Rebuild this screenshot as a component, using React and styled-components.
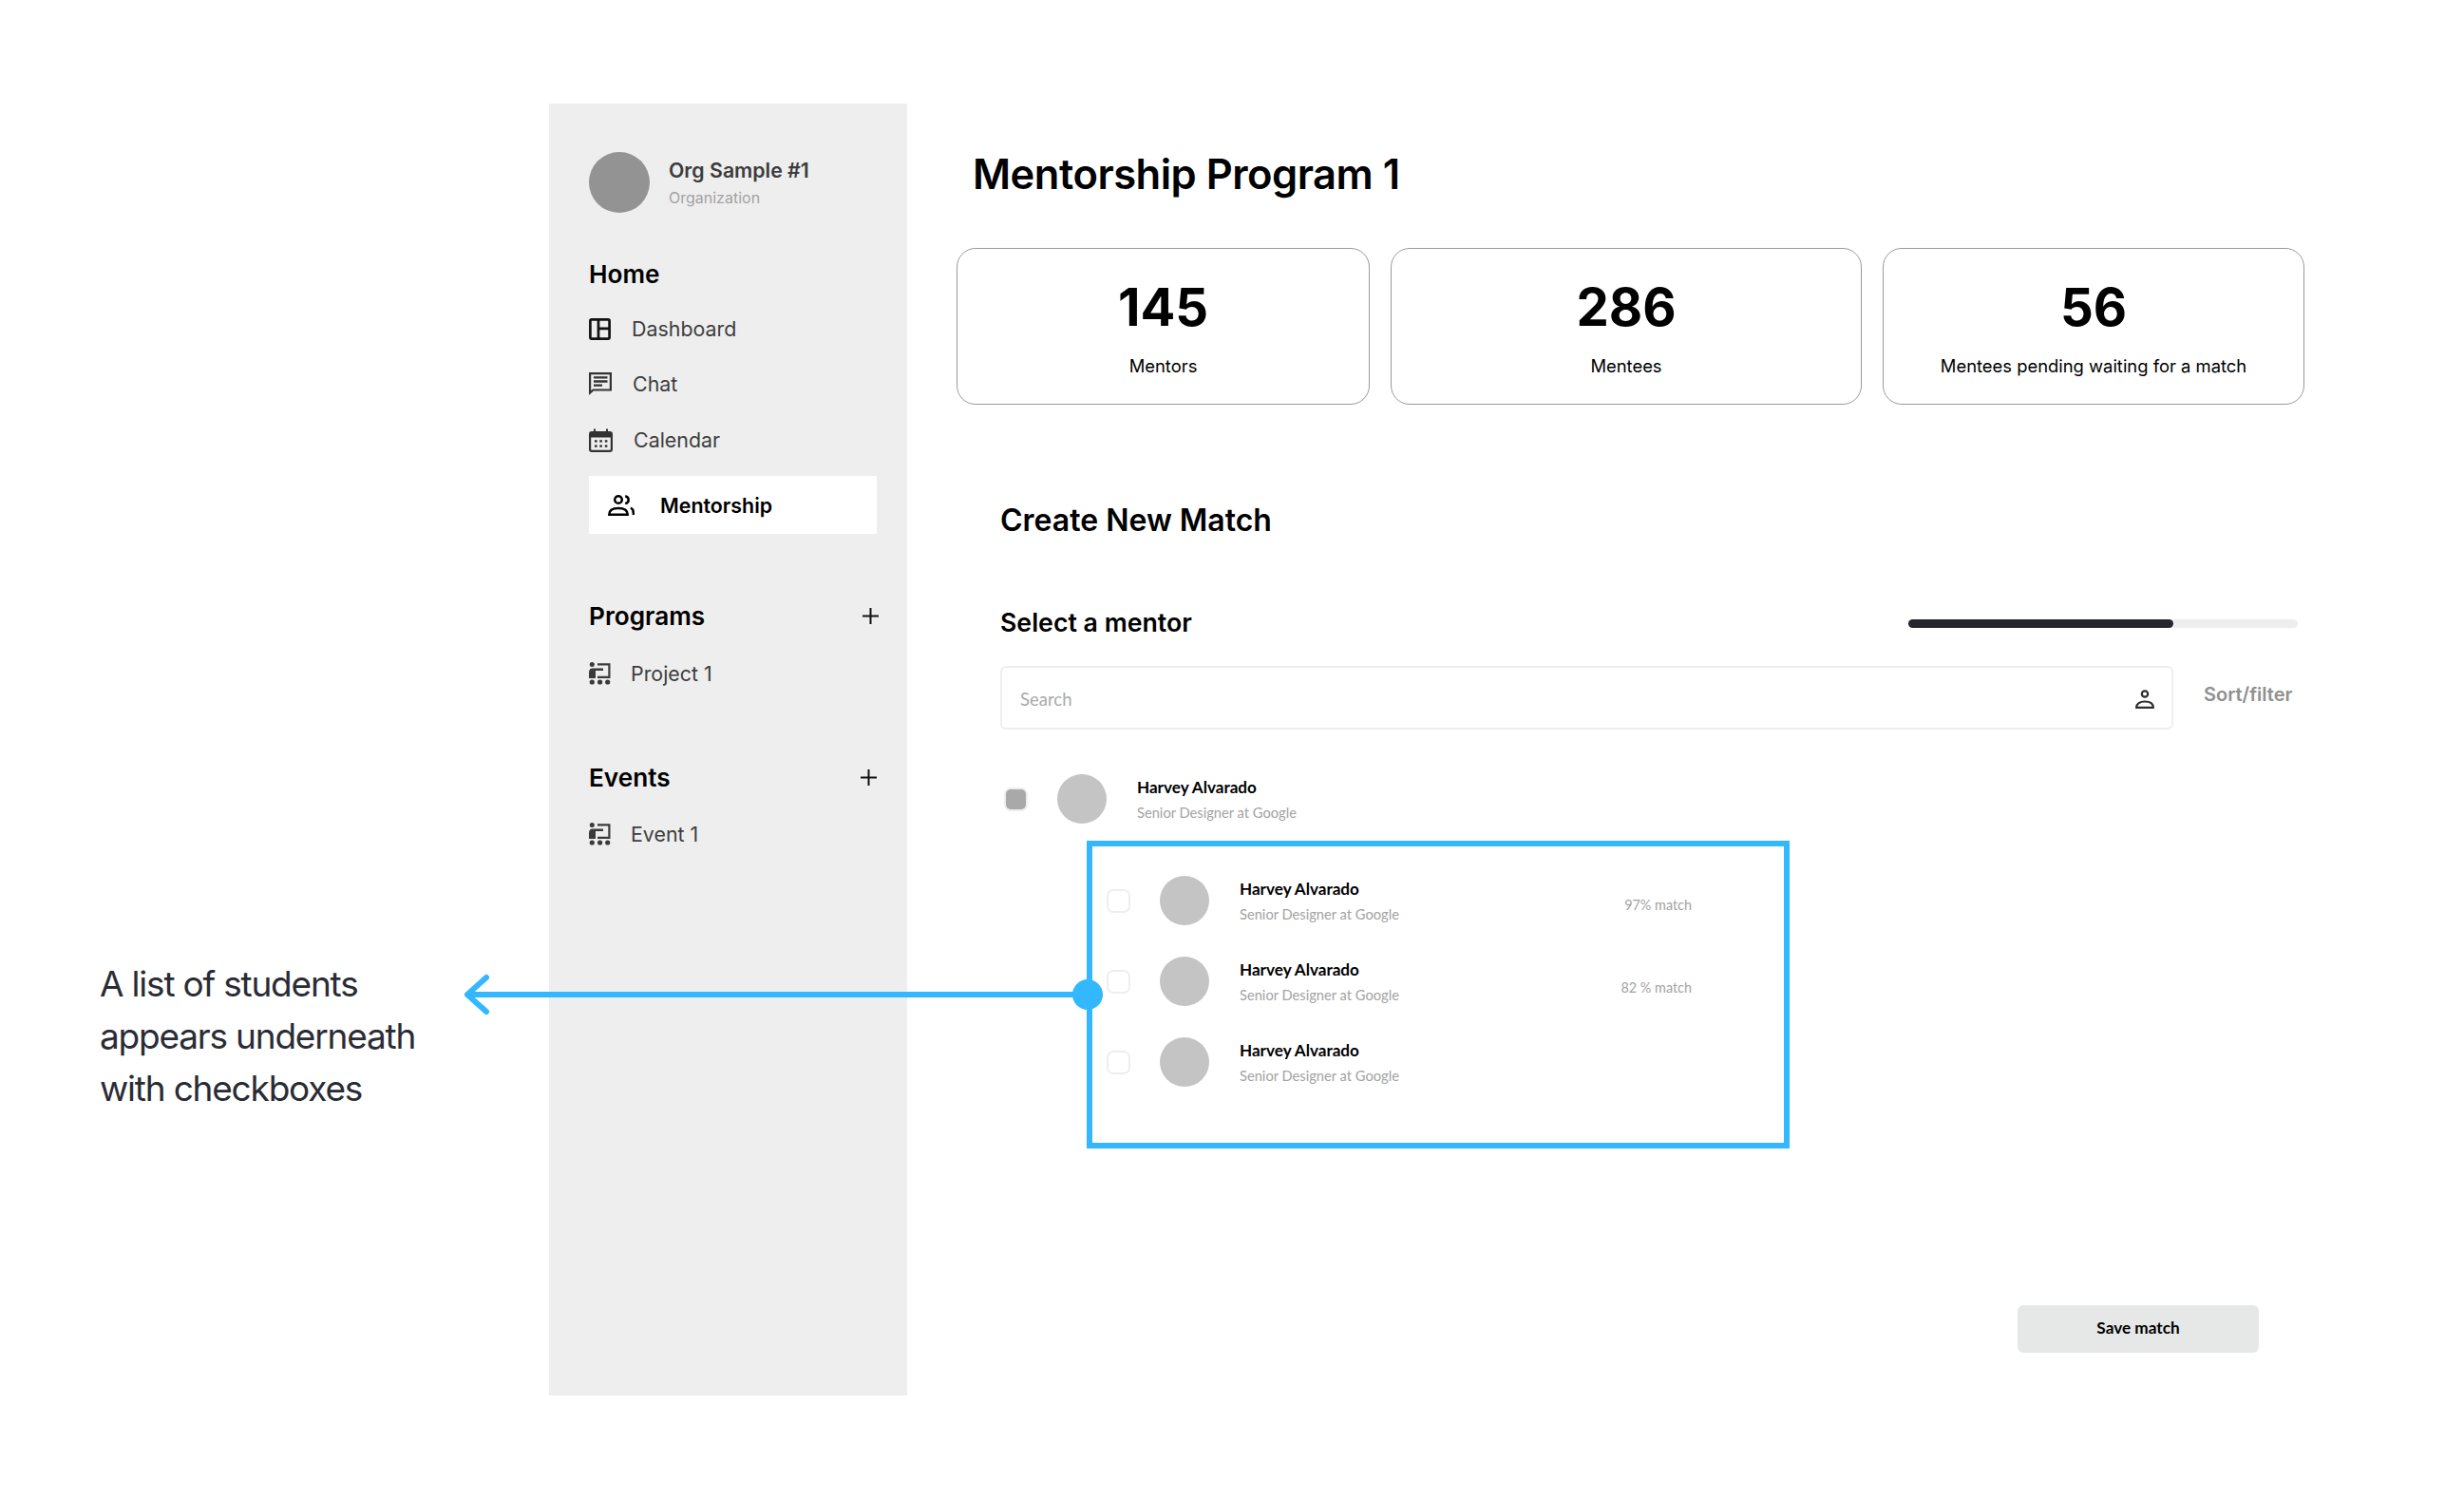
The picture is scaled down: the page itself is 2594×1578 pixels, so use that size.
import React from 'react';
import styled, { createGlobalStyle } from 'styled-components';

const GlobalStyle = createGlobalStyle`
  html, body {
    margin: 0;
    padding: 0;
    background: #fff;
  }
  * {
    box-sizing: border-box;
  }
`;

const Page = styled.div`
  position: relative;
  width: 2594px;
  height: 1578px;
  padding-top: 109px;
  display: flex;
  overflow: hidden;
  font-family: Inter, "Liberation Sans", sans-serif;
  color: #000;
`;

const Annotation = styled.div`
  width: 578px;
  flex-shrink: 0;
  padding: 899px 0 0 105px;
  font-size: 37px;
  line-height: 55px;
  letter-spacing: -1.2px;
  color: #2a2c35;
`;

const Sidebar = styled.aside`
  width: 377px;
  height: 1360px;
  flex-shrink: 0;
  background: #eee;
  padding: 51px 32px 0 42px;
`;

const Org = styled.div`
  display: flex;
  align-items: center;
  gap: 20px;
  margin-bottom: 47px;
`;

const OrgAvatar = styled.div`
  width: 64px;
  height: 64px;
  border-radius: 50%;
  background: #939393;
`;

const OrgName = styled.div`
  font-size: 21.3px;
  line-height: 28px;
  font-weight: 600;
  color: #3c3c3c;
`;

const OrgType = styled.div`
  font-size: 16px;
  line-height: 24px;
  margin-top: 3px;
  color: #a3a3a3;
`;

const SideHeading = styled.div`
  display: flex;
  align-items: center;
  justify-content: space-between;
  height: 34px;
  font-size: 26.2px;
  font-weight: 600;
  margin-top: ${(p) => p.$top || 0}px;
  margin-right: ${(p) => p.$right || 0}px;
`;

const NavItem = styled.div`
  display: flex;
  align-items: center;
  height: 34px;
  margin-top: ${(p) => p.$top}px;
  gap: ${(p) => p.$gap || 22}px;
  font-size: 21.4px;
  color: #3e3e3e;
`;

const ActiveItem = styled.div`
  display: flex;
  align-items: center;
  height: 61px;
  margin-top: 21px;
  padding-left: 20px;
  gap: 27px;
  background: #fff;
  font-size: 21.4px;
  font-weight: 600;
  color: #000;
`;

const Icon = styled.svg`
  display: block;
  flex-shrink: 0;
`;

const Main = styled.main`
  padding: 42px 0 0 52px;
`;

const Title = styled.h1`
  margin: 0 0 46px 17px;
  font-size: 43.5px;
  line-height: 64px;
  font-weight: 600;
  letter-spacing: -0.5px;
`;

const Stats = styled.div`
  display: flex;
  gap: 22px;
`;

const StatCard = styled.div`
  width: ${(p) => p.$width}px;
  height: 165px;
  border: 1.5px solid #9a9a9a;
  border-radius: 20px;
  display: flex;
  flex-direction: column;
  align-items: center;
  padding-top: 27px;
`;

const StatNumber = styled.div`
  font-size: 54.5px;
  line-height: 68px;
  font-weight: 700;
`;

const StatLabel = styled.div`
  font-size: 18.4px;
  line-height: 24px;
  margin-top: 16px;
`;

const Section = styled.section`
  padding-left: 46px;
  margin-top: 102px;
`;

const SectionTitle = styled.h2`
  margin: 0 0 70px;
  font-size: 32px;
  line-height: 40px;
  font-weight: 600;
`;

const SelectRow = styled.div`
  width: 1366px;
  display: flex;
  align-items: center;
  justify-content: space-between;
  margin-bottom: 29px;
`;

const SelectTitle = styled.h3`
  margin: 0;
  font-size: 26.7px;
  line-height: 34px;
  font-weight: 600;
`;

const Progress = styled.div`
  width: 410px;
  height: 9px;
  margin-top: 3px;
  border-radius: 5px;
  background: #eee;
`;

const ProgressFill = styled.div`
  height: 100%;
  border-radius: 5px;
  background: #25272d;
`;

const SearchRow = styled.div`
  display: flex;
  align-items: center;
  gap: 32px;
`;

const SearchBox = styled.div`
  width: 1235px;
  height: 67px;
  border: 2px solid #eee;
  border-radius: 6px;
  display: flex;
  align-items: center;
  justify-content: space-between;
  padding: 3px 18px 0 19px;
  font-family: Lato, sans-serif;
  font-size: 18.5px;
  color: #aaa;
`;

const SortFilter = styled.div`
  font-size: 20px;
  font-weight: 600;
  color: #8f8f8f;
  padding-bottom: 7px;
`;

const Person = styled.div`
  display: flex;
  align-items: center;
  gap: ${(p) => p.$gap}px;
  font-family: Lato, sans-serif;
`;

const MentorRow = styled(Person)`
  margin-top: 47px;
  padding-left: 4px;
`;

const Check = styled.div`
  width: 25px;
  height: 25px;
  border-radius: 7px;
  border: 2px solid #eee;
  background: ${(p) => (p.$on ? '#a9a9a9' : '#fff')};
  flex-shrink: 0;
`;

const Avatar = styled.div`
  width: 52px;
  height: 52px;
  border-radius: 50%;
  background: #c4c4c4;
  flex-shrink: 0;
  margin: 0 ${(p) => p.$after}px 0 0;
`;

const Name = styled.div`
  font-size: 17.1px;
  line-height: 24px;
  margin-top: 1.5px;
  font-weight: 700;
  color: #000;
`;

const Role = styled.div`
  font-size: 14.7px;
  line-height: 24px;
  margin-top: 1.5px;
  color: #a3a3a3;
`;

const Match = styled.div`
  margin-left: auto;
  padding-top: ${(p) => p.$drop}px;
  font-size: 14.4px;
  color: #a3a3a3;
`;

const ListBox = styled.div`
  width: 740px;
  height: 324px;
  margin: 18px 0 0 91px;
  border: 6px solid #33b8ff;
  padding: 31px 97px 0 15px;
  display: flex;
  flex-direction: column;
  gap: 33px;
`;

const SaveButton = styled.button`
  display: block;
  width: 254px;
  height: 50px;
  margin: 165px 0 0 1071px;
  padding: 0 0 4px;
  border: none;
  border-radius: 6px;
  background: #e6e7e7;
  font-family: Lato, sans-serif;
  font-size: 17.2px;
  font-weight: 700;
  color: #000;
`;

const Callout = styled.svg`
  position: absolute;
  left: 480px;
  top: 1020px;
`;

const DashboardIcon = () => (
  <Icon width="23" height="23" viewBox="0 0 23 23" fill="none" stroke="#111" strokeWidth="2.7">
    <rect x="1.4" y="1.4" width="20.2" height="20.2" rx="1.5" />
    <path d="M10 1.4v20.2M10 10.8h11.600" />
  </Icon>
);

const ChatIcon = () => (
  <Icon width="24" height="25" viewBox="0 0 24 25" fill="none" stroke="#333">
    <path d="M1.1 21.5V1.100h21.800v17.400H4.500z" strokeWidth="2.2" />
    <path d="M5 5.4h14.500M5 9.500h14.500M5 13.700h9" strokeWidth="2.3" />
  </Icon>
);

const CalendarIcon = () => (
  <Icon width="25" height="25" viewBox="0 0 25 25" fill="#333">
    <path
      fillRule="evenodd"
      d="M3 3h2V0.500h2V3h11V0.500h2V3h2a3 3 0 0 1 3 3v16a3 3 0 0 1-3 3H3a3 3 0 0 1-3-3V6a3 3 0 0 1 3-3zM2.200 9.500V22c0 .5.300.8.800.8h19c.5 0 .8-.3.800-.8V9.500z"
    />
    <rect x="6" y="12.2" width="2.6" height="2.4" />
    <rect x="11.3" y="12.2" width="2.6" height="2.4" />
    <rect x="16.8" y="12.2" width="2.6" height="2.4" />
    <rect x="6" y="17.4" width="2.6" height="2.4" />
    <rect x="11.3" y="17.4" width="2.6" height="2.4" />
    <rect x="16.8" y="17.4" width="2.6" height="2.4" />
  </Icon>
);

const PeopleIcon = () => (
  <Icon width="28" height="22" viewBox="0 0 28 22" fill="none" stroke="#000" strokeWidth="2.5">
    <circle cx="11" cy="5" r="3.8" />
    <path d="M1.3 20.700c0-4.500 4-6.700 9.700-6.700s9.700 2.200 9.700 6.700z" />
    <path d="M18.2 1.300c2.400.5 3.500 2 3.500 3.900s-1.100 3.400-3.500 3.900M24 13.500c2.200 1.200 3.200 3.500 2.800 7.500" />
  </Icon>
);

const ProjectIcon = () => (
  <Icon width="23" height="24" viewBox="0 0 23 24" fill="#3a3a3a">
    <circle cx="3.3" cy="2.5" r="2.5" />
    <path d="M0 17v-6c0-2 1-4.400 3-4.400h12v2.300H7V17z" />
    <path d="M9 1.300h13.500V17H9v-2.200h11.300V3.500H9z" />
    <circle cx="3.3" cy="21" r="2.6" />
    <circle cx="11.6" cy="21" r="2.6" />
    <circle cx="19.7" cy="21" r="2.6" />
  </Icon>
);

const PlusIcon = () => (
  <Icon width="17" height="17" viewBox="0 0 17 17" stroke="#111" strokeWidth="2">
    <path d="M8.5 0v17M0 8.500h17" />
  </Icon>
);

const SearchPersonIcon = () => (
  <Icon width="20" height="20" viewBox="0 0 20 20" fill="none" stroke="#2e2e2e" strokeWidth="2.2">
    <circle cx="10" cy="4.5" r="3.2" />
    <path d="M1.2 18.800c0-4 3.500-6.300 8.800-6.300s8.800 2.300 8.800 6.300z" />
  </Icon>
);

const students = [
  { id: 1, match: '97% match', drop: 8 },
  { id: 2, match: '82 % match', drop: 12 },
  { id: 3 },
];

const App = () => {
  return (
    <Page>
      <GlobalStyle />
      <Annotation>
        A list of students
        <br />
        appears underneath
        <br />
        with checkboxes
      </Annotation>
      <Sidebar>
        <Org>
          <OrgAvatar />
          <div>
            <OrgName>Org Sample #1</OrgName>
            <OrgType>Organization</OrgType>
          </div>
        </Org>
        <SideHeading>Home</SideHeading>
        <NavItem $top={24}>
          <DashboardIcon />
          Dashboard
        </NavItem>
        <NavItem $top={24}>
          <ChatIcon />
          Chat
        </NavItem>
        <NavItem $top={25}>
          <CalendarIcon />
          Calendar
        </NavItem>
        <ActiveItem>
          <PeopleIcon />
          Mentorship
        </ActiveItem>
        <SideHeading $top={69} $right={-2}>
          Programs
          <PlusIcon />
        </SideHeading>
        <NavItem $top={27} $gap={21}>
          <ProjectIcon />
          Project 1
        </NavItem>
        <SideHeading $top={75}>
          Events
          <PlusIcon />
        </SideHeading>
        <NavItem $top={26} $gap={21}>
          <ProjectIcon />
          Event 1
        </NavItem>
      </Sidebar>
      <Main>
        <Title>Mentorship Program 1</Title>
        <Stats>
          <StatCard $width={435}>
            <StatNumber>145</StatNumber>
            <StatLabel>Mentors</StatLabel>
          </StatCard>
          <StatCard $width={496}>
            <StatNumber>286</StatNumber>
            <StatLabel>Mentees</StatLabel>
          </StatCard>
          <StatCard $width={444}>
            <StatNumber>56</StatNumber>
            <StatLabel>Mentees pending waiting for a match</StatLabel>
          </StatCard>
        </Stats>
        <Section>
          <SectionTitle>Create New Match</SectionTitle>
          <SelectRow>
            <SelectTitle>Select a mentor</SelectTitle>
            <Progress>
              <ProgressFill style={{ width: `${(279 / 410) * 100}%` }} />
            </Progress>
          </SelectRow>
          <SearchRow>
            <SearchBox>
              Search
              <SearchPersonIcon />
            </SearchBox>
            <SortFilter>Sort/filter</SortFilter>
          </SearchRow>
          <MentorRow $gap={31}>
            <Check $on />
            <Avatar $after={1} />
            <div>
              <Name>Harvey Alvarado</Name>
              <Role>Senior Designer at Google</Role>
            </div>
          </MentorRow>
          <ListBox>
            {students.map((student) => (
              <Person key={student.id} $gap={31}>
                <Check />
                <Avatar $after={1} />
                <div>
                  <Name>Harvey Alvarado</Name>
                  <Role>Senior Designer at Google</Role>
                </div>
                {student.match && <Match $drop={student.drop}>{student.match}</Match>}
              </Person>
            ))}
          </ListBox>
          <SaveButton>Save match</SaveButton>
        </Section>
      </Main>
      <Callout width="690" height="60" viewBox="0 0 690 60" fill="none">
        <path d="M665 27H12" stroke="#33b8ff" strokeWidth="6" />
        <path d="M32 9 12 27l20 18" stroke="#33b8ff" strokeWidth="6" strokeLinecap="round" strokeLinejoin="round" />
        <circle cx="665" cy="27" r="16" fill="#33b8ff" />
      </Callout>
    </Page>
  );
};

export default App;
